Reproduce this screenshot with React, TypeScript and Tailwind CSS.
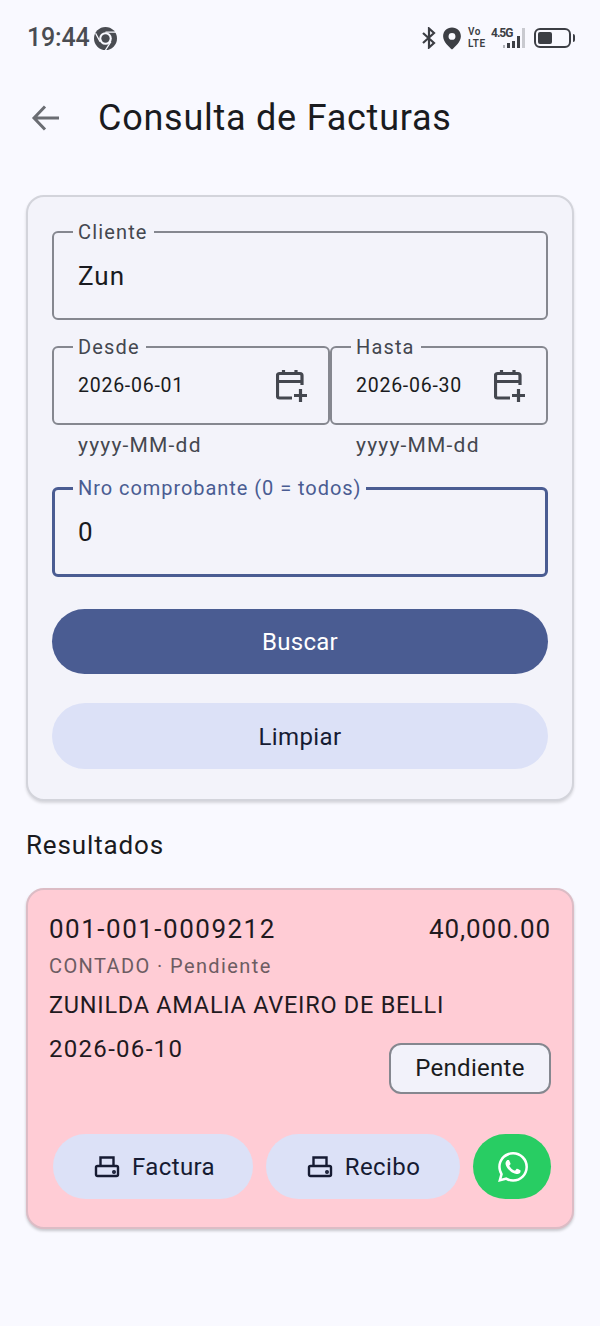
import React from "react";

const Calendar = () => (
  <svg width="32" height="34" viewBox="0 0 32 34" fill="none" stroke="#44474f" strokeWidth="3.2" className="shrink-0">
    <path d="M26 16V6.5a2 2 0 0 0-2-2H3.5a2 2 0 0 0-2 2V27a2 2 0 0 0 2 2H16" />
    <path d="M1.5 12.5H26M7.5 1v4M20 1v4" />
    <path d="M24.5 20v13M18 26.5h13" />
  </svg>
);

const Printer = () => (
  <svg width="26" height="24" viewBox="0 0 26 24" fill="none" stroke="#161b33" strokeWidth="2.4" className="shrink-0">
    <path d="M6.5 11V2.5h13V11" />
    <rect x="2" y="11" width="22" height="10" rx="1.5" />
    <circle cx="20" cy="17" r="0.8" fill="#161b33" />
  </svg>
);

const WhatsApp = () => (
  <svg width="30" height="30" viewBox="0 0 24 24" fill="#ffffff">
    <path d="M17.472 14.382c-.297-.149-1.758-.867-2.03-.967-.273-.099-.471-.148-.67.15-.197.297-.767.966-.94 1.164-.173.199-.347.223-.644.075-.297-.15-1.255-.463-2.39-1.475-.883-.788-1.48-1.761-1.653-2.059-.173-.297-.018-.458.13-.606.134-.133.298-.347.446-.52.149-.174.198-.298.298-.497.099-.198.05-.371-.025-.52-.075-.149-.669-1.612-.916-2.207-.242-.579-.487-.5-.669-.51-.173-.008-.371-.01-.57-.01-.198 0-.52.074-.792.372-.272.297-1.04 1.016-1.04 2.479 0 1.462 1.065 2.875 1.213 3.074.149.198 2.096 3.2 5.077 4.487.709.306 1.262.489 1.694.625.712.227 1.36.195 1.871.118.571-.085 1.758-.719 2.006-1.413.248-.694.248-1.289.173-1.413-.074-.124-.272-.198-.57-.347m-5.421 7.403h-.004a9.87 9.87 0 0 1-5.031-1.378l-.361-.214-3.741.982.998-3.648-.235-.374a9.86 9.86 0 0 1-1.51-5.26c.001-5.45 4.436-9.884 9.888-9.884 2.64 0 5.122 1.03 6.988 2.898a9.825 9.825 0 0 1 2.893 6.994c-.003 5.45-4.437 9.884-9.885 9.884m8.413-18.297A11.815 11.815 0 0 0 12.05 0C5.495 0 .16 5.335.157 11.892c0 2.096.547 4.142 1.588 5.945L.057 24l6.305-1.654a11.882 11.882 0 0 0 5.683 1.448h.005c6.554 0 11.89-5.335 11.893-11.893a11.821 11.821 0 0 0-3.48-8.413z" />
  </svg>
);

const Chrome = () => (
  <svg width="23" height="23" viewBox="0 0 22 22" className="shrink-0">
    <circle cx="11" cy="11" r="11" fill="#4a4c52" />
    <circle cx="11" cy="11" r="6" fill="#f9f9ff" />
    <circle cx="11" cy="11" r="4" fill="#4a4c52" />
    <path d="M11 5h10M5.8 14 1.5 6M16.2 14 11 22" stroke="#f9f9ff" strokeWidth="1.2" fill="none" />
  </svg>
);

const StatusIcons = () => (
  <div className="flex items-center">
    <svg width="16" height="22" viewBox="0 0 16 22" fill="none" stroke="#3c3e44" strokeWidth="2.2" className="mr-[5px]">
      <path d="M2 6l11 10-5 4.5V1.5l5 4.5L2 16" />
    </svg>
    <svg width="20" height="23" viewBox="0 0 19 22" className="mr-[6px]">
      <path fillRule="evenodd" fill="#3c3e44" d="M9.5 0.5C4.5 0.5 1 4.2 1 8.8 1 14 6.5 19 9.5 21.5 12.5 19 18 14 18 8.8 18 4.2 14.5 0.5 9.5 0.5Zm0 5.2a3.3 3.3 0 1 1 0 6.6 3.3 3.3 0 0 1 0-6.6Z" />
    </svg>
    <div className="flex flex-col items-start text-[10px] leading-[12px] font-semibold text-[#3c3e44] w-[23px] shrink-0 tracking-[0.5px]">
      <span>Vo</span>
      <span>LTE</span>
    </div>
    <div className="w-[12px] h-[22px] shrink-0">
      <span className="block text-[12px] leading-[12px] font-bold text-[#3c3e44] tracking-[-1px] whitespace-nowrap">4.5G</span>
    </div>
    <div className="flex items-end gap-[2px] h-[20px] mr-[9px]">
      <span className="w-[2px] h-[3px] bg-[#b0b2b8]" />
      <span className="w-[3px] h-[5px] bg-[#3c3e44]" />
      <span className="w-[3px] h-[7px] bg-[#3c3e44]" />
      <span className="w-[3px] h-[12px] bg-[#3c3e44]" />
      <span className="w-[3px] h-[20px] bg-[#c9cad0]" />
    </div>
    <div className="flex items-center">
      <div className="w-[37px] h-[20px] rounded-[6px] border-2 border-[#3c3e44] p-[2px] flex">
        <div className="w-[14px] h-full rounded-[2px] bg-[#3c3e44]" />
      </div>
      <div className="w-[2px] h-[8px] bg-[#3c3e44] ml-[2px] rounded-r-sm" />
    </div>
  </div>
);

const Outlined = ({
  label,
  className,
  focused,
  children,
}: {
  label: string;
  className?: string;
  focused?: boolean;
  children: React.ReactNode;
}) => (
  <div
    className={`relative flex items-center rounded-[6px] ${
      focused ? "border-[3px] border-[#4a5c92] pl-[23px]" : "border-2 border-[#85878f] pl-[24px]"
    } ${className ?? ""}`}
  >
    <span
      className={`absolute bg-[#f3f3fa] text-[20px] leading-[24px] whitespace-nowrap ${
        focused
          ? "left-[18px] top-[-14px] px-[5px] text-[#4a5c92] tracking-[0.95px]"
          : "left-[19px] top-[-13px] pl-[5px] pr-[6px] text-[#44474f] tracking-[1.15px]"
      }`}
    >
      {label}
    </span>
    {children}
  </div>
);

const Tonal = ({ children, className }: { children: React.ReactNode; className?: string }) => (
  <div
    className={`flex items-center justify-center rounded-full bg-[#dce1f7] text-[#161b33] text-[24px] tracking-[0.4px] ${className ?? ""}`}
  >
    {children}
  </div>
);

export default function App() {
  return (
    <div className="w-[600px] h-[1326px] bg-[#f9f9ff] font-['Roboto',sans-serif] text-[#1a1b20] flex flex-col overflow-hidden">
      <div className="flex items-center justify-between pt-[24px] pl-[27px] pr-[25px] h-[52px] shrink-0">
        <div className="flex items-center gap-[5px]">
          <span className="text-[25px] font-medium text-[#4a4c52] tracking-[-0.2px] leading-[28px]">19:44</span>
          <Chrome />
        </div>
        <StatusIcons />
      </div>

      <div className="flex items-center h-[84px] mt-[24px] shrink-0 pl-[31px]">
        <svg width="30" height="30" viewBox="0 0 30 30" fill="none" stroke="#6b6d73" strokeWidth="3" className="shrink-0">
          <path d="M28 15H3M14 3.5 3 15l11 11.5" />
        </svg>
        <span className="ml-[37px] text-[36px] tracking-[0.75px] leading-[42px] text-[#1a1b20]">Consulta de Facturas</span>
      </div>

      <div className="mt-[35px] mx-[26px] h-[606px] shrink-0 rounded-[18px] border-2 border-[#d3d4db] bg-[#f3f3fa] shadow-[0_2px_3px_rgba(0,0,0,0.14)] px-[24px] pt-[34px] flex flex-col">
        <Outlined label="Cliente" className="h-[89px]">
          <span className="text-[26px] tracking-[1px] relative top-[1px]">Zun</span>
        </Outlined>

        <div className="flex mt-[26px] h-[79px]">
          <Outlined label="Desde" className="w-[278px] justify-between pr-[20px]">
            <span className="text-[19.5px] tracking-[0.75px]">2026-06-01</span>
            <Calendar />
          </Outlined>
          <Outlined label="Hasta" className="flex-1 justify-between pr-[20px]">
            <span className="text-[19.5px] tracking-[0.75px]">2026-06-30</span>
            <Calendar />
          </Outlined>
        </div>

        <div className="flex mt-[7px] h-[26px] text-[21px] leading-[26px] text-[#44474f] tracking-[1.2px]">
          <span className="w-[278px] pl-[26px]">yyyy-MM-dd</span>
          <span className="pl-[26px]">yyyy-MM-dd</span>
        </div>

        <Outlined label="Nro comprobante (0 = todos)" focused className="h-[90px] mt-[29px]">
          <span className="text-[26px]">0</span>
        </Outlined>

        <div className="mt-[32px] h-[65px] shrink-0 rounded-full bg-[#4a5c92] text-white text-[24px] tracking-[0.3px] flex items-center justify-center pt-[1px]">
          Buscar
        </div>
        <Tonal className="mt-[29px] h-[66px] shrink-0 pt-[1px]">Limpiar</Tonal>
      </div>

      <div className="mt-[28px] ml-[26px] text-[26px] leading-[32px] tracking-[0.85px] text-[#1a1b20]">Resultados</div>

      <div className="mt-[27px] mx-[26px] h-[341px] shrink-0 rounded-[18px] border-2 border-[#dcbcc5] bg-[#ffccd5] shadow-[0_2px_3px_rgba(0,0,0,0.2)] px-[21px] pt-[21px] flex flex-col">
        <div className="flex items-center justify-between h-[36px] text-[26px] text-[#1f1a1f] font-[450]">
          <span className="tracking-[1.5px]">001-001-0009212</span>
          <span className="tracking-[0.85px]">40,000.00</span>
        </div>
        <div className="mt-[6px] h-[26px] text-[20px] leading-[26px] tracking-[1.4px] text-[#6d5c62]">CONTADO · Pendiente</div>
        <div className="mt-[10px] h-[32px] text-[23.5px] leading-[32px] tracking-[0.73px] text-[#1f1a1f]">
          ZUNILDA AMALIA AVEIRO DE BELLI
        </div>
        <div className="flex justify-between mt-[8px] h-[66px]">
          <span className="text-[24px] leading-[32px] tracking-[1.3px] pt-[4px] text-[#1f1a1f]">2026-06-10</span>
          <div className="mt-[14px] h-[51px] w-[162px] rounded-[12px] border-2 border-[#85878f] bg-[#f2f2fa] flex items-center justify-center text-[24px] tracking-[0.3px] text-[#1a1b20] pb-[1px]">
            Pendiente
          </div>
        </div>
        <div className="flex items-center mt-[39px] pl-[4px] h-[65px]">
          <Tonal className="w-[200px] h-[65px] gap-[12px] pl-[3px]">
            <Printer />
            <span>Factura</span>
          </Tonal>
          <Tonal className="ml-[13px] w-[194px] h-[65px] gap-[12px] pl-[1px]">
            <Printer />
            <span>Recibo</span>
          </Tonal>
          <div className="ml-[13px] w-[78px] h-[65px] rounded-full bg-[#28cd63] flex items-center justify-center pl-[2px]">
            <WhatsApp />
          </div>
        </div>
      </div>
    </div>
  );
}
